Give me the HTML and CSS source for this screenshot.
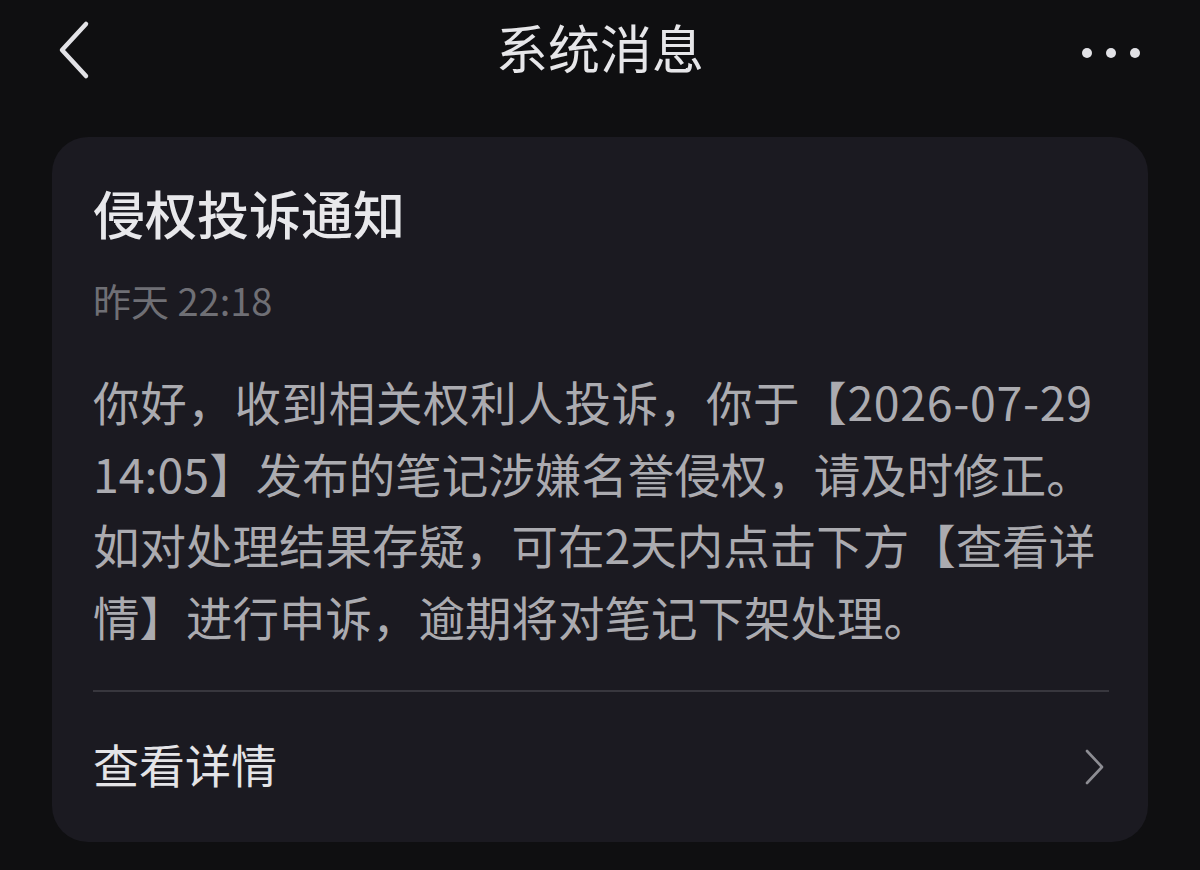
FILE: index.html
```html
<!DOCTYPE html>
<html lang="zh-CN">
<head>
<meta charset="utf-8">
<title>系统消息</title>
<link rel="stylesheet" href="styles.css">
</head>
<body>
<div class="page">
  <header class="nav">
    <div class="nav-back">
      <svg width="40" height="64" viewBox="0 0 40 64"><path d="M30 4 L6 30 L30 56" fill="none" stroke="#e2e2e6" stroke-width="4.5" stroke-linecap="round" stroke-linejoin="round"/></svg>
    </div>
    <h1 class="nav-title">系统消息</h1>
    <div class="nav-more">
      <span class="dot"></span><span class="dot"></span><span class="dot"></span>
    </div>
  </header>
  <section class="card">
    <h2 class="card-title">侵权投诉通知</h2>
    <div class="card-time">昨天 22:18</div>
    <p class="card-body">
      <span class="line line-wide">你好，收到相关权利人投诉，你于【2026-07-29</span>
      <span class="line">14:05】发布的笔记涉嫌名誉侵权，请及时修正。</span>
      <span class="line">如对处理结果存疑，可在2天内点击下方【查看详</span>
      <span class="line">情】进行申诉，逾期将对笔记下架处理。</span>
    </p>
    <div class="divider"></div>
    <div class="card-action">
      <span class="action-text">查看详情</span>
      <svg class="action-arrow" width="24" height="40" viewBox="0 0 24 40"><path d="M4 4 L19 20 L4 36" fill="none" stroke="#8d8d93" stroke-width="2.6" stroke-linecap="round" stroke-linejoin="round"/></svg>
    </div>
  </section>
</div>
</body>
</html>
```
FILE: styles.css
```css
html, body {
  margin: 0;
  padding: 0;
  background: #0f0f11;
}
body {
  font-family: "Noto Sans CJK SC", "Noto Sans", sans-serif;
  width: 1200px;
  height: 870px;
  overflow: hidden;
  text-spacing-trim: space-all;
}
.page {
  display: flex;
  flex-direction: column;
}
.nav {
  height: 100px;
  display: flex;
  align-items: center;
  justify-content: space-between;
  padding: 0 56px 0 56px;
  position: relative;
}
.nav-back {
  display: flex;
  align-items: center;
  margin-top: 4px;
}
.nav-title {
  position: absolute;
  left: 0;
  right: 0;
  top: 0;
  margin: 0;
  text-align: center;
  font-size: 52px;
  font-weight: 400;
  line-height: 94px;
  color: #e6e6e9;
  pointer-events: none;
}
.nav-more {
  display: flex;
  gap: 14px;
  margin-top: 6px;
  margin-right: 4px;
}
.dot {
  width: 10px;
  height: 10px;
  border-radius: 50%;
  background: #e2e2e6;
}
.card {
  margin: 37px 52px 0 52px;
  background: #1b1a21;
  border-radius: 36px;
  padding: 45px 39px 0 41px;
  display: flex;
  flex-direction: column;
  height: 660px;
}
.card-title {
  margin: 0;
  font-size: 52px;
  font-weight: 500;
  line-height: 62px;
  color: #e8e8eb;
}
.card-time {
  margin-top: 33px;
  font-size: 38px;
  line-height: 46px;
  color: #6f6f75;
}
.card-body {
  margin: 42px 0 0 0;
  font-size: 46.5px;
  line-height: 71.5px;
  color: #ababb0;
}
.line {
  display: block;
  white-space: nowrap;
}
.line-wide {
  letter-spacing: 0.65px;
}
.divider {
  margin-top: 39px;
  height: 2px;
  background: #38373e;
}
.card-action {
  display: flex;
  align-items: center;
  justify-content: space-between;
  padding-top: 47px;
}
.action-text {
  font-size: 46px;
  line-height: 48px;
  color: #e4e4e7;
}
.action-arrow {
  margin-top: 8px;
  margin-right: 2px;
}
```
